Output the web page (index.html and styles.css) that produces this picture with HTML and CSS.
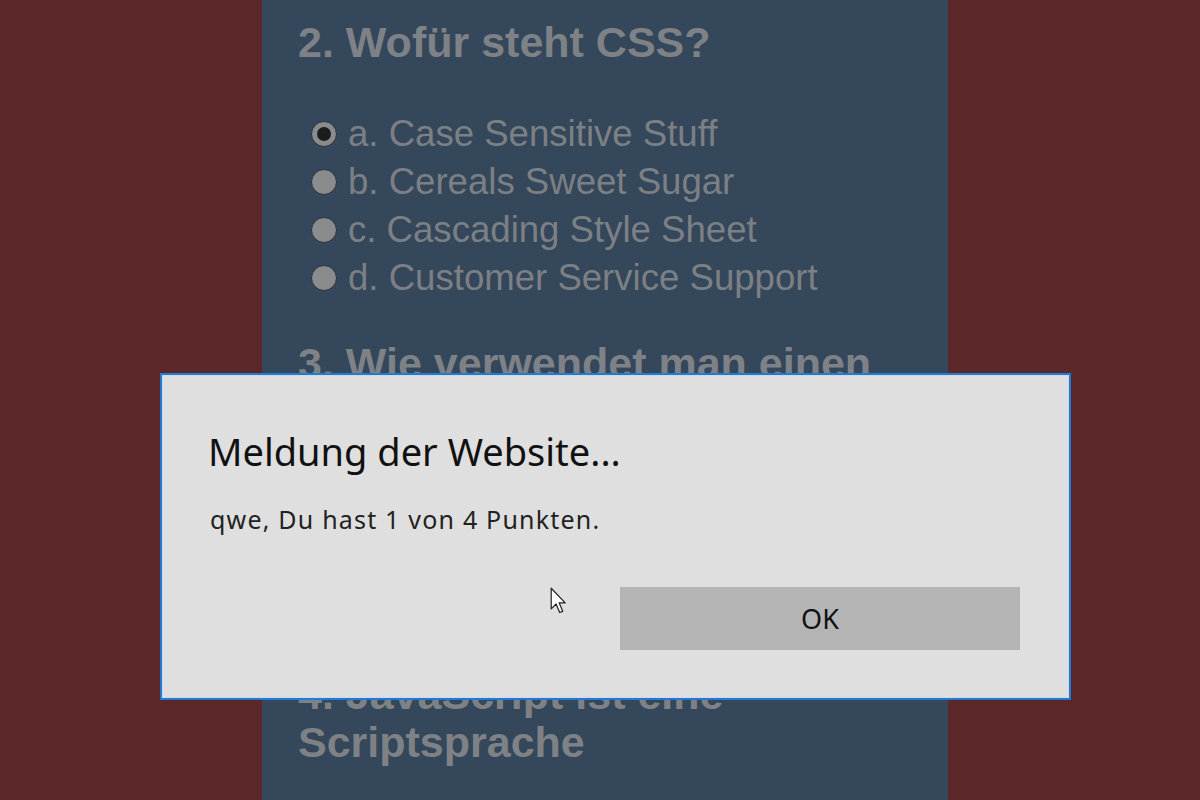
FILE: index.html
```html
<!DOCTYPE html>
<html lang="de">
<head>
    <meta charset="UTF-8">
    <meta name="viewport" content="width=device-width, initial-scale=1.0">
    <title>Quiz</title>
    <link rel="stylesheet" href="styles.css">
</head>
<body>

    <div class="quiz">
        <!-- Frage 2 -->
        <div class="question">
            <h2>2. Wofür steht CSS?</h2>
            <label class="option"><span class="radio checked"></span>a. Case Sensitive Stuff</label>
            <label class="option"><span class="radio"></span>b. Cereals Sweet Sugar</label>
            <label class="option"><span class="radio"></span>c. Cascading Style Sheet</label>
            <label class="option"><span class="radio"></span>d. Customer Service Support</label>
        </div>

        <!-- Frage 3 -->
        <div class="question question-short">
            <h2>3. Wie verwendet man einen Link?</h2>
            <label class="option"><span class="radio"></span>a. &lt;link&gt;</label>
            <label class="option"><span class="radio"></span>b. &lt;a href&gt;</label>
            <label class="option"><span class="radio"></span>c. &lt;href&gt;</label>
        </div>

        <!-- Frage 4 -->
        <div class="question">
            <h2>4. JavaScript ist eine Scriptsprache</h2>
        </div>
    </div>

    <!-- Meldung (alert) -->
    <div class="dialog">
        <div class="dialog-title">Meldung der Website...</div>
        <div class="dialog-text">qwe, Du hast 1 von 4 Punkten.</div>
        <div class="dialog-buttons">
            <button class="dialog-ok">OK</button>
        </div>
    </div>

    <!-- Mauszeiger -->
    <svg class="cursor" width="17" height="28" viewBox="0 0 14 23">
        <path d="M1 1 L1 18 L5 14 L8 21 L10.5 20 L7.5 13 L12.5 13 Z" fill="#ffffff" stroke="#222" stroke-width="1" stroke-linejoin="round"/>
    </svg>

</body>
</html>
```

FILE: styles.css
```css
body {
    margin: 0;
    padding: 0;
    background-color: #5b2729;
    font-family: "Liberation Sans", Arial, sans-serif;
}

.quiz {
    width: 686px;
    height: 100vh;
    overflow: hidden;
    margin-left: 262px;
    padding: 18px 36px 0;
    box-sizing: border-box;
    background-color: #35475a;
    color: #7c8085;
}

.question {
    margin-bottom: 37px;
}

.question-short {
    margin-bottom: 47px;
}

.question h2 {
    font-size: 43px;
    line-height: 48px;
    margin: 0 0 44px;
    color: #7e8286;
}

.option {
    display: flex;
    align-items: center;
    gap: 11px;
    padding-left: 13px;
    font-size: 36.6px;
    line-height: 48px;
}

.radio {
    width: 24px;
    height: 24px;
    border-radius: 50%;
    background-color: #8a8b8c;
    border: 1px solid #2b323b;
    display: flex;
    align-items: center;
    justify-content: center;
    flex-shrink: 0;
}

.radio.checked::after {
    content: "";
    width: 14px;
    height: 14px;
    border-radius: 50%;
    background-color: #1b1c1e;
}

/* Meldungsfenster */
.dialog {
    position: fixed;
    left: 160px;
    top: 373px;
    width: 911px;
    height: 327px;
    box-sizing: border-box;
    padding: 52px 49px 0 46px;
    background-color: #dfdfdf;
    border: 2px solid #2479d0;
    box-shadow: inset 0 0 0 1px #c9dcef;
    font-family: "Noto Sans", "Open Sans", sans-serif;
    color: #111;
}

.dialog-title {
    font-size: 38px;
    line-height: 48px;
}

.dialog-text {
    margin-top: 28px;
    margin-left: 2px;
    font-size: 25px;
    line-height: 32px;
    letter-spacing: 1.2px;
    color: #222;
}

.dialog-buttons {
    display: flex;
    justify-content: flex-end;
    margin-top: 52px;
}

.dialog-ok {
    width: 400px;
    height: 63px;
    border: none;
    background-color: #b4b4b4;
    font-family: "Noto Sans", "Open Sans", sans-serif;
    font-size: 27px;
    color: #111;
    padding: 0;
}

.cursor {
    position: fixed;
    left: 550px;
    top: 587px;
}
```
